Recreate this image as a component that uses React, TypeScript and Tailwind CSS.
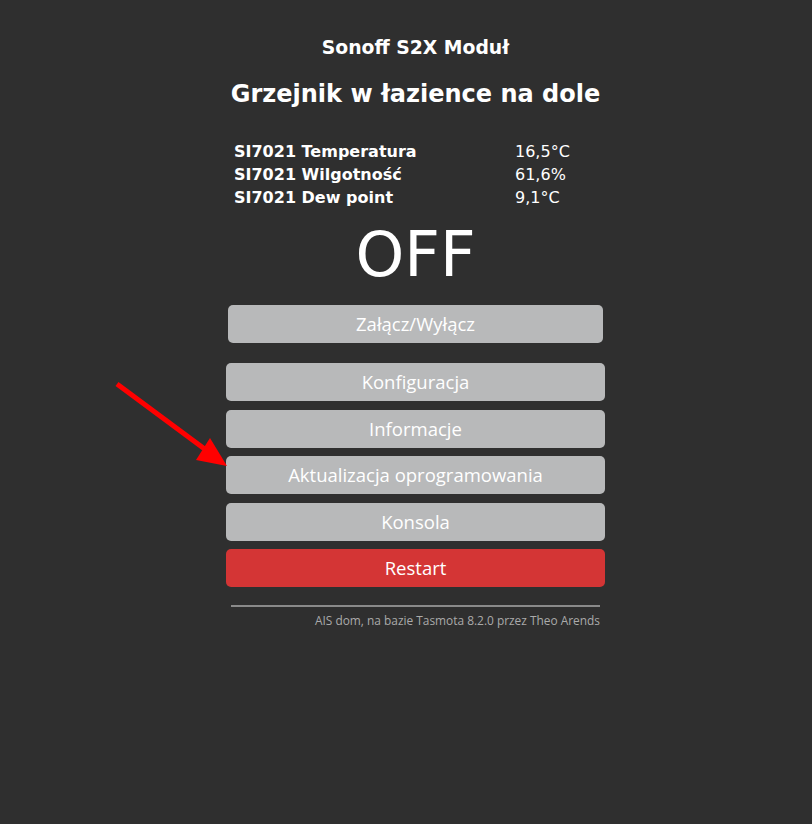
import React from "react";

const btn =
  "w-full h-[38px] rounded-[5px] bg-[#b8b9ba] text-white text-[18.5px] flex items-center justify-center";

export default function App() {
  return (
    <div className="relative w-[812px] h-[824px] bg-[#2f2f2f] text-white overflow-hidden" style={{ fontFamily: "'DejaVu Sans', sans-serif" }}>
      <div className="flex justify-center pl-[19px]">
        <div className="w-[379px] flex flex-col">
          <div className="text-center font-bold text-[18.8px] mt-[36px] leading-[24px] whitespace-nowrap">Sonoff S2X Moduł</div>
          <div className="text-center font-bold text-[24px] mt-[18px] leading-[32px] whitespace-nowrap">Grzejnik w łazience na dole</div>
          <div className="mt-[30px] pl-[8px] flex flex-col text-[16px] leading-[23px]">
            {[
              ["SI7021 Temperatura", "16,5°C"],
              ["SI7021 Wilgotność", "61,6%"],
              ["SI7021 Dew point", "9,1°C"],
            ].map(([a, b]) => (
              <div key={a} className="flex">
                <div className="w-[281px] font-bold">{a}</div>
                <div>{b}</div>
              </div>
            ))}
          </div>
          <div className="text-center text-[62px] leading-[70px] mt-[11px]">OFF</div>
          <div className="px-[2px] mt-[15px]">
            <div className={btn} style={{ fontFamily: "'Open Sans', sans-serif" }}>Załącz/Wyłącz</div>
          </div>
          <div className="flex flex-col gap-[8.5px] mt-[20px]" style={{ fontFamily: "'Open Sans', sans-serif" }}>
            <div className={btn}>Konfiguracja</div>
            <div className={btn}>Informacje</div>
            <div className={btn}>Aktualizacja oprogramowania</div>
            <div className={btn}>Konsola</div>
            <div className={btn + " !bg-[#d43535]"}>Restart</div>
          </div>
          <div className="mx-[5px] mt-[18px] h-[2px] bg-[#8a8a8a]" />
          <div className="mr-[5px] mt-[5px] text-right text-[11.9px] text-[#aaaaaa]" style={{ fontFamily: "'Open Sans', sans-serif" }}>
            AIS dom, na bazie Tasmota 8.2.0 przez Theo Arends
          </div>
        </div>
      </div>
      <svg className="absolute left-0 top-0" width="812" height="824">
        <line x1="117" y1="384" x2="206" y2="450" stroke="#ff0000" strokeWidth="5" />
        <polygon points="227,466 196,460 210,438" fill="#ff0000" />
      </svg>
    </div>
  );
}
